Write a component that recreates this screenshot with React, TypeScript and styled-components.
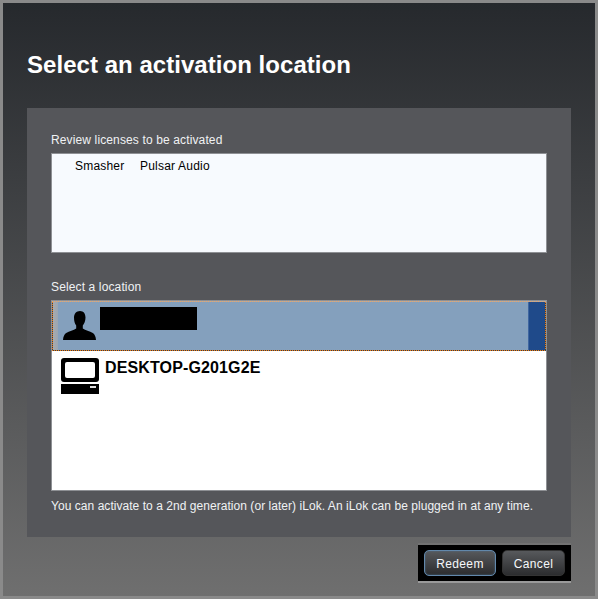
import React from 'react';
import styled, { createGlobalStyle } from 'styled-components';

const GlobalStyle = createGlobalStyle`
  html, body {
    margin: 0;
    padding: 0;
    background: #8a8a8a;
  }
  * {
    box-sizing: border-box;
  }
`;

const Dialog = styled.div`
  width: 598px;
  height: 599px;
  border: 3px solid #8a8a8a;
  background: linear-gradient(180deg, #26292d 0%, #6f6f6f 100%);
  font-family: 'Liberation Sans', Arial, sans-serif;
  color: #f4f6f8;
  padding: 0 24px;
  display: flex;
  flex-direction: column;
`;

const Title = styled.h1`
  margin: 0;
  padding-top: 48px;
  height: 105px;
  font-size: 24px;
  line-height: 28px;
  font-weight: bold;
  letter-spacing: 0.04px;
  color: #fff;
`;

const Panel = styled.div`
  width: 544px;
  height: 429px;
  background: #55565a;
  padding: 24px 24px 0;
  display: flex;
  flex-direction: column;
`;

const Label = styled.div`
  font-size: 12px;
  line-height: 14px;
  height: 21px;
  padding-top: 1px;
  letter-spacing: 0.13px;
  color: #f0f2f4;
`;

const LicenseBox = styled.div`
  height: 100px;
  width: 496px;
  background: #f7fafe;
  border: 1px solid #8e9094;
  padding: 5px 23px;
  display: flex;
  gap: 15.6px;
  font-size: 12px;
  line-height: 14px;
  letter-spacing: 0.2px;
  color: #000;
  margin-bottom: 26px;
`;

const LocationList = styled.div`
  height: 191px;
  width: 496px;
  background: #fff;
  border: 1px solid #8e9094;
  color: #000;
`;

/* focus rectangle: 1px dots painted in the row's 1px padding */
const SelectedRow = styled.div`
  height: 50px;
  padding: 1px;
  display: flex;
  align-items: flex-start;
  background-color: #84a0bd;
  background-repeat: no-repeat;
  background-image:
    repeating-linear-gradient(90deg, #eaa868 0 1px, #a8a8b0 1px 2px),
    repeating-linear-gradient(90deg, #f07a10 0 1px, #30404f 1px 2px),
    repeating-linear-gradient(0deg, #f07a10 0 1px, #30404f 1px 2px),
    repeating-linear-gradient(0deg, #f07a10 0 1px, #30404f 1px 2px);
  background-size: 100% 1px, 100% 1px, 1px 100%, 1px 100%;
  background-position: top left, bottom left, top left, top right;
`;

const PlainRow = styled.div`
  height: 50px;
  display: flex;
  align-items: flex-start;
`;

const RowMark = styled.div`
  width: 5px;
  height: 100%;
  flex: none;
  background: linear-gradient(90deg, #a9abad 0%, #9ba6b2 100%);
`;

const IconSlot = styled.div<{ $selected?: boolean }>`
  flex: none;
  display: flex;
  width: ${(p) => (p.$selected ? '42px' : '53px')};
  padding: ${(p) => (p.$selected ? '9px 0 0 5px' : '7px 0 0 9px')};
`;

const Redacted = styled.div`
  width: 97px;
  height: 23px;
  background: #000;
  margin-top: 5px;
`;

const RowEnd = styled.div`
  width: 17px;
  height: 100%;
  flex: none;
  margin-left: auto;
  background: #1f4a8a;
  border-left: 1px solid #3f66a0;
`;

const ComputerName = styled.div`
  font-size: 16px;
  font-weight: bold;
  line-height: 18px;
  letter-spacing: 0.13px;
  margin-top: 8px;
`;

const Hint = styled.div`
  font-size: 12px;
  line-height: 14px;
  letter-spacing: 0.045px;
  margin-top: 8px;
  color: #f0f2f4;
  white-space: nowrap;
`;

const Footer = styled.div`
  width: 544px;
  margin-top: 6px;
  display: flex;
  justify-content: flex-end;
`;

const ButtonBar = styled.div`
  display: flex;
  gap: 6px;
  padding: 5px 6px;
  background: #000;
  border-top: 2px solid #727272;
  border-bottom: 2px solid #9a9a9a;
`;

const Button = styled.button<{ $primary?: boolean }>`
  height: 26px;
  width: ${(p) => (p.$primary ? '72px' : '63px')};
  padding: 1px 0 0;
  border-radius: 5px;
  border: 1px solid ${(p) => (p.$primary ? '#6288ab' : '#333')};
  box-shadow: ${(p) => (p.$primary ? 'inset 0 0 2px #4f6f8c' : 'none')};
  background: linear-gradient(180deg, #57595c 0%, #2b2c2e 100%);
  color: #f6f8fa;
  font-family: inherit;
  font-size: 12px;
  letter-spacing: 0.35px;
`;

const UserIcon = () => (
  <svg width="33" height="29" viewBox="0 0 33 29" fill="#000">
    <path d="M17 0c3.600 0 5.500 2.800 5.500 6.500 0 3.500-1.300 6.300-2.700 8v3c2.500 1.700 7 2.700 10 4.500 1.800 1.200 3 3.500 3.200 7H0c.2-3.500 1.400-5.800 3.200-7 3-1.800 7.500-2.800 10-4.500v-3c-1.400-1.700-2.200-4.500-2.200-8C11 2.800 13.400 0 17 0z" />
  </svg>
);

const ComputerIcon = () => (
  <svg width="38" height="36" viewBox="0 0 38 36">
    <rect x="0" y="0" width="38" height="24" rx="3" fill="#000" />
    <rect x="4" y="4" width="30" height="16" rx="2" fill="#fff" />
    <rect x="0" y="26" width="38" height="10" fill="#000" />
    <rect x="29" y="28" width="6" height="2" fill="#ddd" />
  </svg>
);

const App: React.FC = () => {
  return (
    <>
      <GlobalStyle />
      <Dialog>
        <Title>Select an activation location</Title>
        <Panel>
          <Label>Review licenses to be activated</Label>
          <LicenseBox>
            <span>Smasher</span>
            <span>Pulsar Audio</span>
          </LicenseBox>
          <Label>Select a location</Label>
          <LocationList>
            <SelectedRow>
              <RowMark />
              <IconSlot $selected>
                <UserIcon />
              </IconSlot>
              <Redacted />
              <RowEnd />
            </SelectedRow>
            <PlainRow>
              <IconSlot>
                <ComputerIcon />
              </IconSlot>
              <ComputerName>DESKTOP-G201G2E</ComputerName>
            </PlainRow>
          </LocationList>
          <Hint>You can activate to a 2nd generation (or later) iLok. An iLok can be plugged in at any time.</Hint>
        </Panel>
        <Footer>
          <ButtonBar>
            <Button $primary>Redeem</Button>
            <Button>Cancel</Button>
          </ButtonBar>
        </Footer>
      </Dialog>
    </>
  );
};

export default App;
